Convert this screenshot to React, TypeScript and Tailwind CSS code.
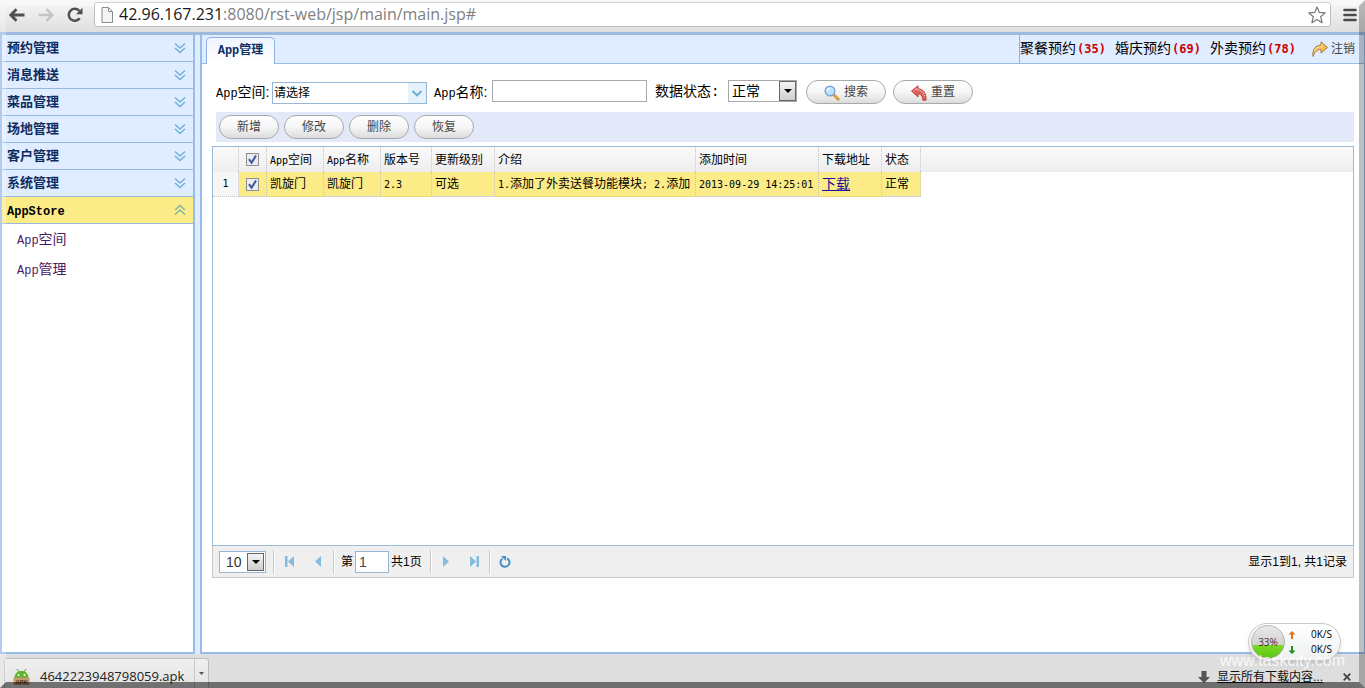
import React from 'react';

const SANS = "font-['Liberation_Sans','Noto_Sans_CJK_SC',sans-serif]";
const BTN =
  'flex h-6 items-center justify-center rounded-full border border-[#a9a9a9] bg-linear-to-b from-white via-[#f6f6f6] to-[#dcdcdc] pt-[2px] text-xs text-[#444]';

function Mono({ children, size = 'text-[10px]' }: { children: React.ReactNode; size?: string }) {
  return <span className={`font-['DejaVu_Sans_Mono',monospace] ${size}`}>{children}</span>;
}

function Word({ children }: { children: React.ReactNode }) {
  return <span className="font-['Liberation_Mono',monospace] text-xs">{children}</span>;
}

function Chevrons({ up = false }: { up?: boolean }) {
  return (
    <svg width="12" height="12" viewBox="0 0 12 12" fill="none" stroke={up ? '#7fb59a' : '#6fb1d6'} strokeWidth="1.5" aria-hidden="true">
      {up ? <path d="M1 6l5-4.5L11 6M1 10.5L6 6l5 4.5" /> : <path d="M1 1.5L6 6l5-4.5M1 6l5 4.5L11 6" />}
    </svg>
  );
}

function SelectArrow() {
  return (
    <span className="pointer-events-none absolute top-px right-px bottom-px flex w-[17px] items-center justify-center border border-[#666] bg-linear-to-b from-[#f4f4f4] to-[#cfcfcf]">
      <svg width="8" height="4" viewBox="0 0 8 4" aria-hidden="true"><path d="M0 0h8L4 4z" fill="#000" /></svg>
    </span>
  );
}

function BrowserBar() {
  return (
    <header className="flex h-8 items-start bg-linear-to-b from-[#f7f7f7] to-[#dfdfdf] pt-[2px] pr-2 pl-2">
      <button aria-label="后退" className="mt-[3px] flex h-5 w-[18px] items-center justify-center">
        <svg width="16" height="14" viewBox="0 0 16 14" fill="none" stroke="#505050" strokeWidth="2.8"><path d="M15.5 7H2M7.5 1.2L1.8 7l5.7 5.8" /></svg>
      </button>
      <button aria-label="前进" className="mt-[3px] ml-3 flex h-5 w-4 items-center justify-center">
        <svg width="16" height="14" viewBox="0 0 16 14" fill="none" stroke="#c4c4c4" strokeWidth="2.6"><path d="M.5 7H14M8.5 1.2L14.2 7l-5.7 5.8" /></svg>
      </button>
      <button aria-label="刷新" className="mt-[3px] ml-[13px] flex h-5 w-4 items-center justify-center">
        <svg width="16" height="16" viewBox="0 0 16 16"><path d="M12.7 11.2A6 6 0 1 1 12.4 4" fill="none" stroke="#505050" strokeWidth="2.5" /><path d="M15.5.8v6.5H9z" fill="#505050" /></svg>
      </button>
      <div className="ml-[11px] flex h-[25px] flex-1 items-center rounded-[3px] border border-[#bdbdbd] bg-white pr-1 pl-[6px]">
        <svg width="13" height="16" viewBox="0 0 13 16" fill="#f4f4f4" stroke="#8a8a8a" aria-hidden="true"><path d="M1 .5h6.5l4 4v11H1zM7.5.5v4h4" /></svg>
        <div className="-mt-[2px] ml-[5px] flex-1 font-['Open_Sans',sans-serif] text-base leading-5 text-[#808080]">
          <span className="text-[#1a1a1a]">42.96.167.231</span>:8080/rst-web/jsp/main/main.jsp#
        </div>
        <button aria-label="收藏">
          <svg width="18" height="18" viewBox="0 0 18 18" fill="#fff" stroke="#777" strokeWidth="1.2" strokeLinejoin="round"><path d="M9 1l2.3 5.4 5.9.5-4.5 3.9 1.4 5.9L9 13.6l-5.1 3.1 1.4-5.9L.8 6.9l5.9-.5z" /></svg>
        </button>
      </div>
      <button aria-label="菜单" className="mt-[5px] ml-3 flex h-4 w-[14px] items-center">
        <svg width="14" height="14" viewBox="0 0 14 14" stroke="#4a4a4a" strokeWidth="2.6" strokeLinecap="round"><path d="M1.5 2h11M1.5 7h11M1.5 12h11" /></svg>
      </button>
    </header>
  );
}

const menus = ['预约管理', '消息推送', '菜品管理', '场地管理', '客户管理', '系统管理'];
const MENU = 'flex h-[27px] w-full items-center justify-between border-b border-[#99b9dc] pr-[7px] pl-[5px] font-bold';

function Sidebar() {
  return (
    <nav className="w-[195px] shrink-0 border-x-2 border-b-2 border-[#99bbe8] bg-white">
      {menus.map((m) => (
        <button key={m} className={`${MENU} bg-[#e0ecff] text-[13px] text-[#0e2d5f]`}>
          <span className="pt-[2px]">{m}</span>
          <Chevrons />
        </button>
      ))}
      <button className={`${MENU} bg-[#fbec88] text-black`}>
        <span className="pt-[2px]"><Word>AppStore</Word></span>
        <Chevrons up />
      </button>
      <ul className="pt-px text-sm leading-[30px] text-[#4b1a63]">
        <li className="pl-[15px]"><a href="#"><Word>App</Word>空间</a></li>
        <li className="pl-[15px]"><a href="#"><Word>App</Word>管理</a></li>
      </ul>
    </nav>
  );
}

const counts: [string, number][] = [['聚餐预约', 35], ['婚庆预约', 69], ['外卖预约', 78]];

function TabBar() {
  return (
    <div className="flex h-[29px] border-b border-[#99bbe8] bg-[#e0ecff]">
      <button className="mt-[2px] ml-1 -mb-px flex w-[69px] items-center justify-center rounded-t-[5px] border border-b-0 border-[#8db2e3] bg-linear-to-b from-[#eff5ff] to-white text-xs font-bold text-[#0e2d5f]">
        <Word>App</Word>管理
      </button>
      <div className="ml-auto flex w-[345px] items-center border-l border-[#8db2e3] text-sm text-black">
        {counts.map(([label, n]) => (
          <a key={label} href="#" className="flex w-[95px] items-center whitespace-nowrap">
            {label}
            <span className="ml-px font-['DejaVu_Sans_Mono',monospace] text-xs font-bold text-[#cc0000]">({n})</span>
          </a>
        ))}
        <a href="#" className="ml-[7px] flex items-center gap-[3px] text-xs whitespace-nowrap text-[#444]">
          <svg width="16" height="16" viewBox="0 0 16 16" aria-hidden="true"><path d="M1 15.5C.2 8.600 3.200 4.400 9 4.300V.8l6.600 5.700L9 12V8.600C5.200 8.400 2.600 10.800 1 15.500z" fill="#f6bd55" stroke="#a87c3c" strokeLinejoin="round" /><path d="M2.500 10C3.600 7 6 5.500 10 5.600V3.400" fill="none" stroke="#fde7b0" /></svg>
          <span className="pt-px">注销</span>
        </a>
      </div>
    </div>
  );
}

function Filters() {
  return (
    <form className="flex h-12 items-start pt-4 pl-[14px] text-sm text-black" onSubmit={(e) => e.preventDefault()}>
      <label htmlFor="space" className={`w-14 leading-6 whitespace-nowrap ${SANS}`}><Word>App</Word>空间:</label>
      <span className="relative mt-[2px] block h-[22px] w-[155px]">
        <select id="space" className="h-full w-full appearance-none border border-[#95b8d7] bg-white pt-[2px] pl-px text-xs">
          <option>请选择</option>
        </select>
        <span className="pointer-events-none absolute top-px right-px bottom-px flex w-[18px] items-center justify-center bg-[#e6f1fc]">
          <svg width="10" height="7" viewBox="0 0 10 7" fill="none" stroke="#6db4d4" strokeWidth="2" aria-hidden="true"><path d="M.5 1L5 5.300 9.500 1" /></svg>
        </span>
      </span>
      <label htmlFor="name" className={`ml-[7px] w-[58px] leading-6 whitespace-nowrap ${SANS}`}><Word>App</Word>名称:</label>
      <input id="name" className="h-[22px] w-[155px] border border-[#a9a9a9] bg-white px-1" />
      <label htmlFor="state" className="ml-2 w-[73px] leading-6 whitespace-nowrap">数据状态:</label>
      <span className="relative block h-[22px] w-[69px]">
        <select id="state" className="h-full w-full appearance-none border border-[#a9a9a9] bg-white pt-px pl-[3px] text-sm leading-5">
          <option>正常</option>
        </select>
        <SelectArrow />
      </span>
      <button className={`${BTN} ml-[9px] w-20 gap-1`}>
        <svg width="16" height="16" viewBox="0 0 16 16" aria-hidden="true"><path d="M9.500 9.500l4.700 4.700" stroke="#d99a3a" strokeWidth="3" strokeLinecap="round" /><circle cx="6" cy="6" r="4.800" fill="#bfe2fa" stroke="#74a8dc" strokeWidth="1.400" /><path d="M3.500 6A2.600 2.600 0 0 1 6 3.400" fill="none" stroke="#fff" strokeWidth="1.300" /></svg>
        搜索
      </button>
      <button type="reset" className={`${BTN} ml-[7px] w-20 gap-1`}>
        <svg width="16" height="16" viewBox="0 0 16 16" aria-hidden="true"><path d="M.5 6L7 .8v3c5.500.4 8.400 4.600 8 11.400h-3.200C11.400 11 10 9 7 8.800v3.200z" fill="#e0605a" stroke="#b9433e" strokeLinejoin="round" /><path d="M2.500 6L6 3.200v1.700c4 .1 6.500 2 7.600 6" fill="none" stroke="#f6b9b3" /></svg>
        重置
      </button>
    </form>
  );
}

const box = 'overflow-hidden border-r border-dotted border-[#c4c4c4] text-left font-normal whitespace-nowrap';
const cell = `${box} pt-[2px] pl-[3px]`;

function Tick({ label }: { label: string }) {
  return (
    <span className="relative mx-auto block size-[13px]">
      <input type="checkbox" defaultChecked aria-label={label} className="peer block size-[13px] appearance-none border border-[#8e8f8f] bg-[#e9ecf2]" />
      <svg className="pointer-events-none absolute inset-0 hidden peer-checked:block" width="13" height="13" viewBox="0 0 13 13" aria-hidden="true"><path d="M3 6.200l2.600 3.600L10 2.600" fill="none" stroke="#3f5596" strokeWidth="2" /></svg>
    </span>
  );
}

function Grid() {
  return (
    <div className="flex-1 overflow-hidden border border-[#99bbd8] bg-[linear-gradient(#fafafa,#eeeeee)] bg-[length:100%_25px] bg-no-repeat">
      <table className="w-[708px] table-fixed border-separate border-spacing-0 text-xs text-black">
        <colgroup>
          <col className="w-[26px]" /><col className="w-7" /><col className="w-[57px]" /><col className="w-[57px]" /><col className="w-[51px]" />
          <col className="w-[63px]" /><col className="w-[201px]" /><col className="w-[123px]" /><col className="w-[63px]" /><col className="w-[39px]" />
        </colgroup>
        <thead>
          <tr className="h-[25px]">
            <th className={box} />
            <th className={box}><Tick label="全选" /></th>
            <th className={cell}><Mono>App</Mono>空间</th>
            <th className={cell}><Mono>App</Mono>名称</th>
            <th className={cell}>版本号</th>
            <th className={cell}>更新级别</th>
            <th className={cell}>介绍</th>
            <th className={cell}>添加时间</th>
            <th className={cell}>下载地址</th>
            <th className={cell}>状态</th>
          </tr>
        </thead>
        <tbody>
          <tr className="h-[25px] bg-[#fbec88]">
            <td className="border-r border-b border-dotted border-[#c4c4c4] bg-[#f6f6f6] text-center"><Mono>1</Mono></td>
            <td className={`${box} border-b`}><Tick label="选择第1行" /></td>
            <td className={`${cell} border-b`}>凯旋门</td>
            <td className={`${cell} border-b`}>凯旋门</td>
            <td className={`${cell} border-b`}><Mono>2.3</Mono></td>
            <td className={`${cell} border-b`}>可选</td>
            <td className={`${cell} border-b`}><Mono>1.</Mono>添加了外卖送餐功能模块<Mono>; 2.</Mono>添加</td>
            <td className={`${cell} border-b`}><Mono>2013-09-29 14:25:01</Mono></td>
            <td className={`${cell} border-b`}><a href="#" className="text-sm leading-5 text-[#1a0f9c] underline">下载</a></td>
            <td className={`${cell} border-b`}>正常</td>
          </tr>
        </tbody>
      </table>
    </div>
  );
}

function PageButton({ label, children }: { label: string; children: React.ReactNode }) {
  return (
    <button aria-label={label} className="flex size-7 items-center justify-center">
      <svg width="10" height="11" viewBox="0 0 10 11" fill="#84bbe0" aria-hidden="true">{children}</svg>
    </button>
  );
}

function Pager() {
  const sep = <span className="h-6 w-[2px] border-l border-[#c8c8c8] bg-white" />;
  return (
    <div className={`flex h-8 shrink-0 items-center border border-t-0 border-[#c8c8c8] bg-[#efefef] px-[6px] text-xs text-black ${SANS}`}>
      <span className="relative block h-[22px] w-[47px]">
        <select aria-label="每页条数" className="h-full w-full appearance-none border border-[#95b8d7] bg-white pl-[6px] text-sm leading-5 text-[#333]">
          <option>10</option>
        </select>
        <span className="absolute inset-y-px right-px"><SelectArrow /></span>
      </span>
      <span className="w-[7px]" />
      {sep}
      <span className="w-px" />
      <PageButton label="首页"><path d="M0 0h2.500v11H0zM9 0v11L3 5.500z" /></PageButton>
      <PageButton label="上一页"><path d="M8 0v11L2 5.500z" /></PageButton>
      <span className="w-px" />
      {sep}
      <label className="ml-[6px] flex items-center gap-[2px] whitespace-nowrap">
        第
        <input defaultValue="1" className="h-[22px] w-[34px] border border-[#95b8d7] bg-white px-[3px] text-sm text-[#444]" />
        共1页
      </label>
      <span className="w-2" />
      {sep}
      <PageButton label="下一页"><path d="M2 0v11l6-5.500z" /></PageButton>
      <PageButton label="末页"><path d="M1 0v11l6-5.500zM7.500 0H10v11H7.500z" /></PageButton>
      <span className="w-px" />
      {sep}
      <button aria-label="刷新列表" className="flex size-7 items-center justify-center">
        <svg width="12" height="12" viewBox="0 0 12 12" aria-hidden="true"><path d="M3.500 2.600A4.500 4.500 0 1 0 8 2.300" fill="none" stroke="#4391c4" strokeWidth="2" /><path d="M2 0h5v5z" fill="#4391c4" /></svg>
      </button>
      <span className="ml-auto">显示1到1, 共1记录</span>
    </div>
  );
}

function SpeedBall() {
  return (
    <div className="absolute right-6 bottom-[27px] flex h-[38px] w-[93px] items-center rounded-full border border-[#c9c9c9] bg-linear-to-b from-white to-[#eef0f0] pl-[2px] shadow-md">
      <div className="flex size-[34px] shrink-0 items-center justify-center rounded-full border border-[#b5b5b5] bg-[linear-gradient(#e9e9e9_0%,#d2d2d2_58%,#7ddb26_58%,#5cc512_100%)] font-['Open_Sans',sans-serif] text-[10px] text-[#4a2f2f]">33%</div>
      <div className="ml-[3px] grid flex-1 grid-cols-[8px_1fr] items-center gap-x-[15px] font-['Open_Sans',sans-serif] text-[10px] leading-[15px] text-black">
        <svg width="8" height="8" viewBox="0 0 8 8"><path d="M4 0l3.500 3.500h-2.500V8H3V3.500H.5z" fill="#e0701c" /></svg>
        <span>0K/S</span>
        <svg width="8" height="8" viewBox="0 0 8 8"><path d="M4 8l3.500-3.500h-2.500V0H3v4.500H.5z" fill="#228b22" /></svg>
        <span>0K/S</span>
      </div>
    </div>
  );
}

function DownloadBar() {
  return (
    <footer className="flex h-[34px] items-start bg-[#dedede] pt-1 pl-1 text-xs">
      <div className="flex h-[30px] rounded-t-[3px] border border-b-0 border-[#bdbdbd] bg-linear-to-b from-[#efefef] to-[#e4e4e4]">
        <button className="flex w-[189px] items-center pt-[6px] pl-2 font-['Open_Sans',sans-serif] text-[13px] text-[#222]">
          <svg width="17" height="18" viewBox="0 0 17 18" aria-hidden="true">
            <path d="M4 1l2 3M13 1l-2 3" stroke="#5aa02c" />
            <path d="M1.500 10C1.500 5.500 4.500 3 8.500 3s7 2.500 7 7z" fill="#5fb52f" />
            <circle cx="5.500" cy="7" r="1" fill="#fff" /><circle cx="11.500" cy="7" r="1" fill="#fff" />
            <path d="M.5 9.500h16V17H.5z" fill="#c39a6c" />
            <text x="8.500" y="15.500" textAnchor="middle" fontSize="6" fontWeight="bold" fontFamily="Liberation Sans, sans-serif" fill="#5b3a1c">APK</text>
          </svg>
          <span className="ml-[10px]">4642223948798059.apk</span>
        </button>
        <button aria-label="更多操作" className="flex w-[14px] items-center justify-center border-l border-[#c6c6c6]">
          <svg width="5" height="3" viewBox="0 0 5 3"><path d="M0 0h5L2.500 3z" fill="#555" /></svg>
        </button>
      </div>
      <div className={`mt-[10px] ml-auto flex items-center pr-[14px] ${SANS}`}>
        <svg width="12" height="12" viewBox="0 0 12 12" aria-hidden="true"><path d="M3.500 0h5v6H12l-6 6-6-6h3.500z" fill="#555" /></svg>
        <a href="#" className="ml-[7px] leading-[18px] text-[#111] underline">显示所有下载内容...</a>
        <button aria-label="关闭" className="ml-5">
          <svg width="8" height="8" viewBox="0 0 8 8" stroke="#444" strokeWidth="1.800"><path d="M.7.700l6.600 6.600M7.300.700L.7 7.300" /></svg>
        </button>
      </div>
    </footer>
  );
}

export default function App() {
  return (
    <div className="relative flex min-h-screen flex-col overflow-hidden bg-white font-['Liberation_Mono','Noto_Sans_CJK_SC',sans-serif]">
      <BrowserBar />
      <div className="flex flex-1 border-t-[3px] border-[#9dbade] bg-[#e0ecff]">
        <Sidebar />
        <main className="ml-[5px] flex min-w-0 flex-1 flex-col border-r border-b-2 border-l-2 border-[#99bbe8] bg-white">
          <TabBar />
          <Filters />
          <div className="mr-[10px] ml-[14px] flex h-[30px] shrink-0 items-center gap-[5px] bg-[#e3e9f8] pl-[3px]">
            {['新增', '修改', '删除', '恢复'].map((t) => (
              <button key={t} className={`${BTN} w-[60px]`}>{t}</button>
            ))}
          </div>
          <div className="mt-1 mr-[10px] mb-[74px] ml-[10px] flex flex-1 flex-col">
            <Grid />
            <Pager />
          </div>
        </main>
      </div>
      <DownloadBar />
      <SpeedBall />
      <span className={`pointer-events-none absolute right-5 bottom-[18px] text-base leading-[18px] text-white/80 ${SANS}`}>www.taskcity.com</span>
      <div className="pointer-events-none absolute inset-0 border-6 border-t-white/30 border-r-black/25 border-b-black/50 border-l-white/25" />
    </div>
  );
}
